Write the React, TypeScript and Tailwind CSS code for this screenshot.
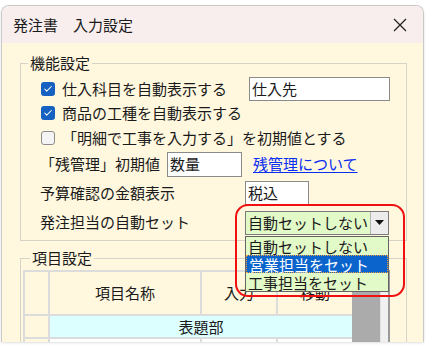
import { Check } from 'lucide-react'

const font = "font-['Noto_Sans_CJK_JP','Noto_Sans',sans-serif]"

function CheckBox({ checked }: { checked: boolean }) {
  return checked ? (
    <span className="flex items-center justify-center w-[14px] h-[14px] rounded-[3px] bg-[#1560c0]">
      <Check size={10} strokeWidth={2.5} className="text-white" />
    </span>
  ) : (
    <span className="block w-[14px] h-[14px] rounded-[3px] bg-[#f4f4f4] border border-[#8c8c8c]" />
  )
}

function TextBox({ value, className }: { value: string; className: string }) {
  return (
    <div className={`flex items-center bg-white border border-[#8a8a8a] pl-[2px] ${className}`}>
      {value}
    </div>
  )
}

export default function App() {
  return (
    <div className={`w-[426px] h-[352px] bg-white overflow-hidden text-[15px] text-[#1a1a1a] ${font}`}>
      <div className="ml-[1px] mt-[5px] w-[423px] h-[337px] flex flex-col border border-b-0 border-[#c9c9c9] rounded-t-[8px] overflow-hidden shadow-sm">
        {/* Title bar */}
        <div className="h-[37px] shrink-0 flex items-center justify-between pl-[11px] pr-[15px] bg-[#f9eeee]">
          <span className="leading-none">発注書　入力設定</span>
          <svg width="16" height="16" viewBox="0 0 16 16" className="text-[#222]">
            <path d="M2 2L14 14M14 2L2 14" stroke="currentColor" strokeWidth="1.3" />
          </svg>
        </div>

        {/* Body */}
        <div className="relative flex-1 bg-[#fff7de]">
          {/* 機能設定 */}
          <fieldset className="ml-[18px] mt-[10px] w-[387px] border border-[#d6d3c8] pt-[4px] pb-[5px]">
            <legend className="ml-[7px] px-[2px] leading-[20px]">機能設定</legend>

            <div className="h-[24px] flex items-center pl-[20px]">
              <CheckBox checked />
              <span className="ml-[7px] w-[187px]">仕入科目を自動表示する</span>
              <TextBox value="仕入先" className="w-[141px] h-[24px]" />
            </div>
            <div className="h-[24px] flex items-center pl-[20px]">
              <CheckBox checked />
              <span className="ml-[7px]">商品の工種を自動表示する</span>
            </div>
            <div className="h-[26px] flex items-center pl-[20px]">
              <CheckBox checked={false} />
              <span className="ml-[7px]">「明細で工事を入力する」を初期値とする</span>
            </div>
            <div className="h-[26px] flex items-center pl-[19px]">
              <span className="w-[127px]">「残管理」初期値</span>
              <TextBox value="数量" className="w-[75px] h-[25px]" />
              <span className="ml-[11px] text-[#0a2ef0] underline underline-offset-2">残管理について</span>
            </div>
            <div className="mt-[3px] h-[26px] flex items-center pl-[19px]">
              <span className="w-[205px]">予算確認の金額表示</span>
              <TextBox value="税込" className="w-[64px] h-[24px]" />
            </div>
            <div className="mt-[4px] h-[25px] flex items-center pl-[19px]">
              <span className="w-[205px]">発注担当の自動セット</span>
              <div className="w-[144px] h-[24px] flex border border-[#7a7a7a] bg-[#e2f9c8]">
                <span className="flex-1 flex items-center pl-[2px] leading-none">自動セットしない</span>
                <span className="w-[18px] flex items-center justify-center bg-[#ececec] border-l border-[#b5b5b5]">
                  <svg width="9" height="5" viewBox="0 0 9 5">
                    <path d="M0 0H9L4.5 5Z" fill="#111" />
                  </svg>
                </span>
              </div>
            </div>
          </fieldset>

          {/* 項目設定 */}
          <fieldset className="ml-[18px] mt-[7px] w-[387px] border border-[#d6d3c8] pt-[2px] pl-[2px] h-[120px]">
            <legend className="ml-[7px] px-[2px] leading-[20px]">項目設定</legend>
            <div className="flex">
              <div className="grid grid-cols-[23px_150px_74px_74px] grid-rows-[42px_21px_30px] gap-[2px] p-[2px] pr-0 bg-[#dcdcdc]">
                <div className="bg-[#fff7de]" />
                <div className="bg-[#fff7de] flex items-center justify-center">項目名称</div>
                <div className="bg-[#fff7de] flex items-center justify-center">入力</div>
                <div className="bg-[#fff7de] flex items-center justify-center">移動</div>
                <div className="bg-[#fff7de]" />
                <div className="col-span-3 bg-[#dcffff] flex items-center justify-center leading-none">表題部</div>
                <div className="bg-[#fff7de]" />
                <div className="bg-white" />
                <div className="bg-white" />
                <div className="bg-white" />
              </div>
              <div className="w-[28px] bg-[#ababab]" />
              <div className="w-[10px] bg-[#f0f0f0] border-l border-[#e2e2e2] border-r-2 border-r-[#9a9a9a]" />
            </div>
          </fieldset>

          {/* open combo list */}
          <div className="absolute left-[243px] top-[193px] w-[144px] border border-[#646464] bg-[#e2f9c8] leading-none">
            <div className="h-[18px] flex items-center pl-[2px]">自動セットしない</div>
            <div className="h-[18px] flex items-center pl-[2px] bg-[#0a64cc] text-white border border-dotted border-[#f0a040]">営業担当をセット</div>
            <div className="h-[18px] flex items-center pl-[2px]">工事担当をセット</div>
          </div>

          {/* highlight */}
          <div className="absolute left-[233px] top-[161px] w-[170px] h-[93px] border-2 border-[#f01010] rounded-[13px]" />
        </div>
      </div>
    </div>
  )
}
